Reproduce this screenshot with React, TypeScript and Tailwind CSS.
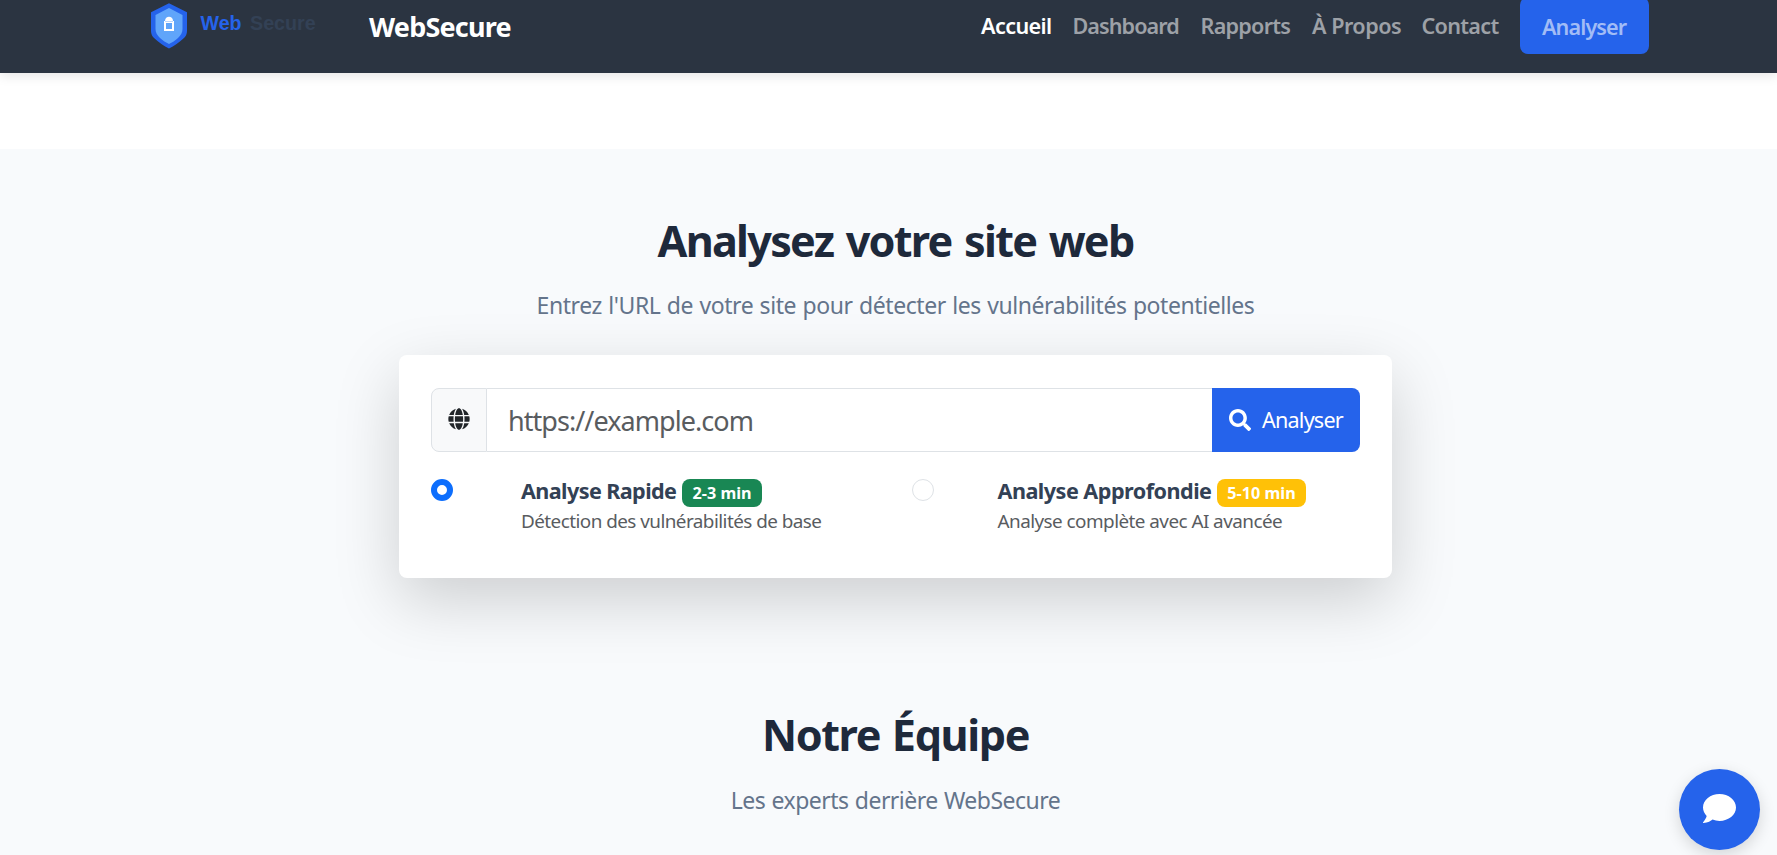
import { FaComment, FaGlobe, FaSearch } from "react-icons/fa";

function Logo() {
  return (
    <svg className="h-[51px] w-[170px] shrink-0" viewBox="0 0 170 51" aria-label="Web Secure">
      <path d="M18 3.3 L36 12.2 V31 Q36 35.5 32.4 38.6 C28.5 42.5 23 46 18 48.6 C13 46 7.5 42.5 3.6 38.6 Q0 35.5 0 31 V12.2 Z" fill="#2563eb" />
      <path d="M18 8 L31.5 15 V29 C31.5 36 24 41 18 44 C12 41 4.5 36 4.5 29 V15 Z" fill="#60a5fa" />
      <path d="M14 21 C14 15.4 22 15.4 22 21 Z" fill="#fff" />
      <rect x="13" y="21" width="10" height="10" fill="#fff" />
      <path d="M14 21.5 H22" stroke="#a9cdfc" strokeWidth="0.8" />
      <rect x="15" y="23" width="6" height="6" fill="#60a5fa" />
      <text x="49.5" y="30" fontFamily="Liberation Sans, Arial, sans-serif" fontSize="19.6" fontWeight="700" fill="#2563eb">Web</text>
      <text x="99" y="30" fontFamily="Liberation Sans, Arial, sans-serif" fontSize="19.7" fontWeight="700" fill="#334155">Secure</text>
    </svg>
  );
}

export default function App() {
  return (
    <div className="relative flex h-[855px] w-[1777px] flex-col overflow-hidden bg-white font-['Noto_Sans','Open_Sans',sans-serif] text-[21.6px] whitespace-nowrap">
      <header className="z-10 h-[73px] shrink-0 bg-[#2b3441] shadow-[0_3px_11px_rgba(0,0,0,0.1)]">
        <div className="flex h-[51px] items-center pl-[151px]">
          <Logo />
          <div className="ml-[48px] w-[612px] pt-[2px] text-[27px] leading-none font-bold tracking-[-0.78px] text-white">WebSecure</div>
          <nav className="flex items-center leading-none font-semibold text-[#9da1a7]">
            <a className="w-[91.5px] tracking-[-0.6px] text-white">Accueil</a>
            <a className="w-[128px] tracking-[-0.95px]">Dashboard</a>
            <a className="w-[111.5px] tracking-[-0.75px]">Rapports</a>
            <a className="w-[109.5px] tracking-[-0.5px]">À Propos</a>
            <a className="w-[98px] tracking-[-0.7px]">Contact</a>
            <a className="flex h-[57px] w-[129px] items-center rounded-[8px] bg-[#2563eb] pt-[2px] pl-[22.5px] tracking-[-0.9px] text-[#a2bcf6]">Analyser</a>
          </nav>
        </div>
      </header>

      <main className="mt-[76px] flex flex-1 flex-col items-center bg-[#f8fafc] pl-[14px] text-center">
        <h2 className="mt-[66px] h-[52px] text-[43.2px] leading-[52px] font-bold tracking-[-1.75px] text-[#1e293b] [word-spacing:3px]">Analysez votre site web</h2>
        <p className="mt-[22px] h-[32px] text-[23px] leading-[32px] tracking-[-0.42px] text-[#64748b] [word-spacing:0.8px]">Entrez l'URL de votre site pour détecter les vulnérabilités potentielles</p>

        <section className="mt-[34px] h-[223px] w-[993px] rounded-[8px] bg-white px-[32px] pt-[33px] text-left shadow-[0_22px_65px_rgba(0,0,0,0.175)]">
          <div className="flex h-[64px]">
            <div className="flex w-[56px] items-center justify-center rounded-l-[8px] border border-[#dee2e6] bg-[#f8f9fa] pb-[2px]">
              <FaGlobe className="size-[22px] text-[#212529]" />
            </div>
            <div className="flex-1 border-y border-[#dee2e6] pl-[21px] text-[27px] leading-[63px] tracking-[-0.95px] text-[#595c5f]">https://example.com</div>
            <button className="flex w-[148px] items-center rounded-r-[8px] bg-[#2563eb] pl-[17px] tracking-[-0.8px] text-white">
              <FaSearch className="mb-[1px] size-[22px]" />
              <span className="ml-[11px] pt-[1px]">Analyser</span>
            </button>
          </div>

          <div className="mt-[27px] flex">
            <div className="flex w-[481px]">
              <div className="size-[22px] shrink-0 rounded-full border-[6px] border-[#0d6efd] bg-white" />
              <div className="ml-[68px]">
                <div className="flex h-[28px]">
                  <span className="w-[161px] leading-[23px] font-bold tracking-[-0.6px] text-[#334155]">Analyse Rapide</span>
                  <span className="h-[28px] w-[80px] rounded-[8px] bg-[#198754] text-center text-[16.2px] leading-[29px] font-bold text-white">2-3 min</span>
                </div>
                <p className="text-[18.9px] leading-[28px] tracking-[-0.55px] text-[#595c5f]">Détection des vulnérabilités de base</p>
              </div>
            </div>
            <div className="flex">
              <div className="size-[22px] shrink-0 rounded-full border border-[#dee2e6] bg-white" />
              <div className="ml-[63.5px]">
                <div className="flex h-[28px]">
                  <span className="w-[219.5px] leading-[23px] font-bold tracking-[-0.52px] text-[#334155]">Analyse Approfondie</span>
                  <span className="h-[28px] w-[89px] rounded-[8px] bg-[#ffc107] text-center text-[16.2px] leading-[29px] font-bold text-white">5-10 min</span>
                </div>
                <p className="text-[18.9px] leading-[28px] tracking-[-0.55px] text-[#595c5f]">Analyse complète avec AI avancée</p>
              </div>
            </div>
          </div>
        </section>

        <h2 className="mt-[131px] h-[52px] text-[43.2px] leading-[52px] font-bold tracking-[-1.4px] text-[#1e293b] [word-spacing:2px]">Notre Équipe</h2>
        <p className="mt-[23px] h-[32px] text-[23px] leading-[32px] tracking-[-0.52px] text-[#64748b] [word-spacing:0.8px]">Les experts derrière WebSecure</p>
      </main>

      <button className="absolute top-[769px] left-[1679px] flex size-[81px] items-center justify-center rounded-full bg-[#2563eb] pb-[2px] text-white shadow-[0_5px_16px_rgba(0,0,0,0.15)]">
        <FaComment className="size-[33px]" />
      </button>
    </div>
  );
}
